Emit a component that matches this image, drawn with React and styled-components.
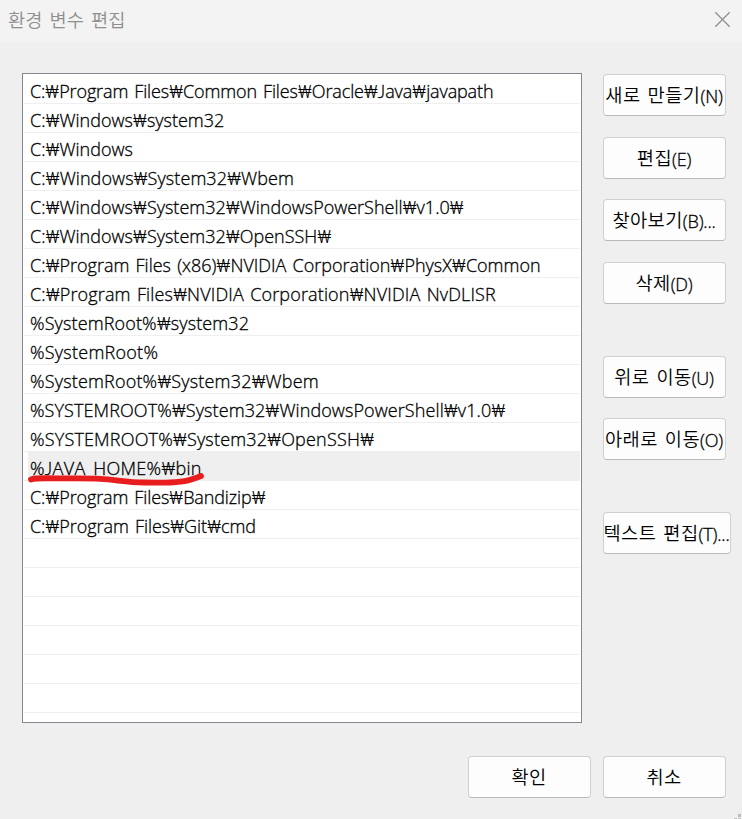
import React from "react";
import styled, { createGlobalStyle } from "styled-components";

const GlobalStyle = createGlobalStyle`
  * { box-sizing: border-box; }
  body { margin: 0; background: #efefef; overflow: hidden; }
`;

const Dialog = styled.div`
  position: relative;
  width: 742px;
  height: 819px;
  display: flex;
  flex-direction: column;
  background: #efefef;
  color: #000;
  font-family: "Noto Sans CJK KR", sans-serif;
  font-size: 18.67px;
  font-weight: 350;
  letter-spacing: 0.2px;
`;

const TitleBar = styled.header`
  height: 42px;
  flex: none;
  display: flex;
  justify-content: space-between;
  padding: 0 11px 0 8px;
  background: #f3f3f3;
  color: #8f8f8f;
`;

const Title = styled.h1`
  margin: 0;
  font-size: inherit;
  font-weight: inherit;
  line-height: 38px;
  word-spacing: 2.4px;
`;

const CloseButton = styled.button`
  width: 17px;
  height: 17px;
  margin-top: 11px;
  padding: 0;
  border: 0;
  background: none;
  svg { display: block; }
`;

const Content = styled.main`
  display: flex;
  align-items: flex-start;
  padding: 31px 0 0 22px;
  gap: 21px;
`;

const PathList = styled.ul`
  width: 560px;
  height: 650px;
  margin: 0;
  padding: 1px 1px 0;
  list-style: none;
  overflow: hidden;
  border: 1px solid #828790;
  background: #fff;
`;

const PathRow = styled.li`
  height: 29px;
  padding-left: 6px;
  border-bottom: 1px solid #efefef;
  background: ${(p) => (p.$selected ? "linear-gradient(#efefef, #efefef) 4px 0 no-repeat" : "none")};
  font-family: "Open Sans", "Noto Sans CJK KR", sans-serif;
  font-size: 18px;
  font-weight: 300;
  -webkit-text-stroke: 0.3px #000;
  line-height: 33px;
  white-space: pre;
  letter-spacing: ${(p) => p.$tracking ?? 0}px;
  word-spacing: 1.5px;
`;

const Separator = styled.span`
  display: inline-flex;
  justify-content: center;
  width: 14px;
  font-family: Roboto, sans-serif;
  font-weight: 300;
  -webkit-text-stroke: 0;
  letter-spacing: 0;
  line-height: 1;
`;

const CapitalJ = styled.span`
  font-family: Lato, sans-serif;
  line-height: 1;
`;

const Actions = styled.div`
  display: flex;
  flex-direction: column;
  align-items: flex-start;
  padding-top: 1px;
`;

const Button = styled.button`
  width: ${(p) => p.$width ?? 123}px;
  height: 42px;
  margin: ${(p) => p.$gap ?? 0}px 0 0;
  padding: 0 1px 2px 0;
  border: 1px solid #d0d0d0;
  border-bottom-color: #bababa;
  border-radius: 4px;
  background: #fdfdfd;
  color: #000;
  font: inherit;
  letter-spacing: 0.45px;
  line-height: 38px;
  white-space: pre;
  overflow: hidden;
  display: flex;
  justify-content: center;
  word-spacing: 2.4px;
`;

const Key = styled.span`
  font-family: "Open Sans", sans-serif;
  font-weight: 300;
  -webkit-text-stroke: 0.3px #000;
  font-size: 18px;
  letter-spacing: -0.2px;
  padding-top: 2px;
`;

const Footer = styled.footer`
  display: flex;
  gap: 12px;
  padding: 33px 0 0 468px;
`;

const Underline = styled.svg`
  position: absolute;
  left: 24px;
  top: 468px;
`;

const Grip = styled.svg`
  position: absolute;
  right: 0;
  bottom: 0;
`;

const paths = [
  { text: "C:\\Program Files\\Common Files\\Oracle\\Java\\javapath", tracking: -0.13 },
  { text: "C:\\Windows\\system32" },
  { text: "C:\\Windows" },
  { text: "C:\\Windows\\System32\\Wbem", tracking: 0.08 },
  { text: "C:\\Windows\\System32\\WindowsPowerShell\\v1.0\\" },
  { text: "C:\\Windows\\System32\\OpenSSH\\" },
  { text: "C:\\Program Files (x86)\\NVIDIA Corporation\\PhysX\\Common" },
  { text: "C:\\Program Files\\NVIDIA Corporation\\NVIDIA NvDLISR", tracking: 0.14 },
  { text: "%SystemRoot%\\system32", tracking: 0.13 },
  { text: "%SystemRoot%", tracking: 0.25 },
  { text: "%SystemRoot%\\System32\\Wbem", tracking: 0.18 },
  { text: "%SYSTEMROOT%\\System32\\WindowsPowerShell\\v1.0\\", tracking: 0.09 },
  { text: "%SYSTEMROOT%\\System32\\OpenSSH\\", tracking: 0.18 },
  { text: "%JAVA_HOME%\\bin", selected: true, tracking: 0.3 },
  { text: "C:\\Program Files\\Bandizip\\", tracking: -0.12 },
  { text: "C:\\Program Files\\Git\\cmd", tracking: -0.06 },
  ...Array.from({ length: 6 }, () => ({ text: "" })),
];

const actions = [
  { label: "새로 만들기", key: "(N)" },
  { label: "편집", key: "(E)", gap: 21 },
  { label: "찾아보기", key: "(B)...", gap: 20 },
  { label: "삭제", key: "(D)", gap: 21 },
  { label: "위로 이동", key: "(U)", gap: 52 },
  { label: "아래로 이동", key: "(O)", gap: 20 },
  { label: "텍스트 편집", key: "(T)...", gap: 52, width: 128 },
];

function PathText({ text }) {
  return text.split(/([\\J])/).map((part, i) => {
    if (part === "\\") return <Separator key={i}>₩</Separator>;
    if (part === "J") return <CapitalJ key={i}>J</CapitalJ>;
    return part;
  });
}

export default function App() {
  return (
    <Dialog>
      <GlobalStyle />
      <TitleBar>
        <Title>환경 변수 편집</Title>
        <CloseButton aria-label="닫기">
          <svg width="17" height="17" viewBox="0 0 17 17">
            <path d="M1.3 1.3 15.7 15.7M15.7 1.3 1.3 15.7" stroke="#8f8f8f" strokeWidth="1.3" />
          </svg>
        </CloseButton>
      </TitleBar>
      <Content>
        <PathList>
          {paths.map((p, i) => (
            <PathRow key={i} $selected={p.selected} $tracking={p.tracking}>
              <PathText text={p.text} />
            </PathRow>
          ))}
        </PathList>
        <Actions>
          {actions.map((a) => (
            <Button key={a.label} $gap={a.gap} $width={a.width}>
              {a.label}
              <Key>{a.key}</Key>
            </Button>
          ))}
        </Actions>
      </Content>
      <Footer>
        <Button>확인</Button>
        <Button>취소</Button>
      </Footer>
      <Underline width="184" height="22" viewBox="0 0 184 22">
        <path
          d="M7 11.500C12 9.500 22 10.500 35 10.300C48 10.500 62 10 76 10.800C91 11.500 103 14.500 120 14.500C132 14.500 137 15 146 14.500C163 13.500 167 12 177 8"
          fill="none"
          stroke="#e81e1e"
          strokeWidth="5.800"
          strokeLinecap="round"
          strokeLinejoin="round"
        />
      </Underline>
      <Grip width="8" height="5" viewBox="0 0 8 5" fill="#bdbdbd">
        <path d="M4 0h3v3H4zM0 4h3v1H0zM4 4h3v1H4z" />
      </Grip>
    </Dialog>
  );
}
